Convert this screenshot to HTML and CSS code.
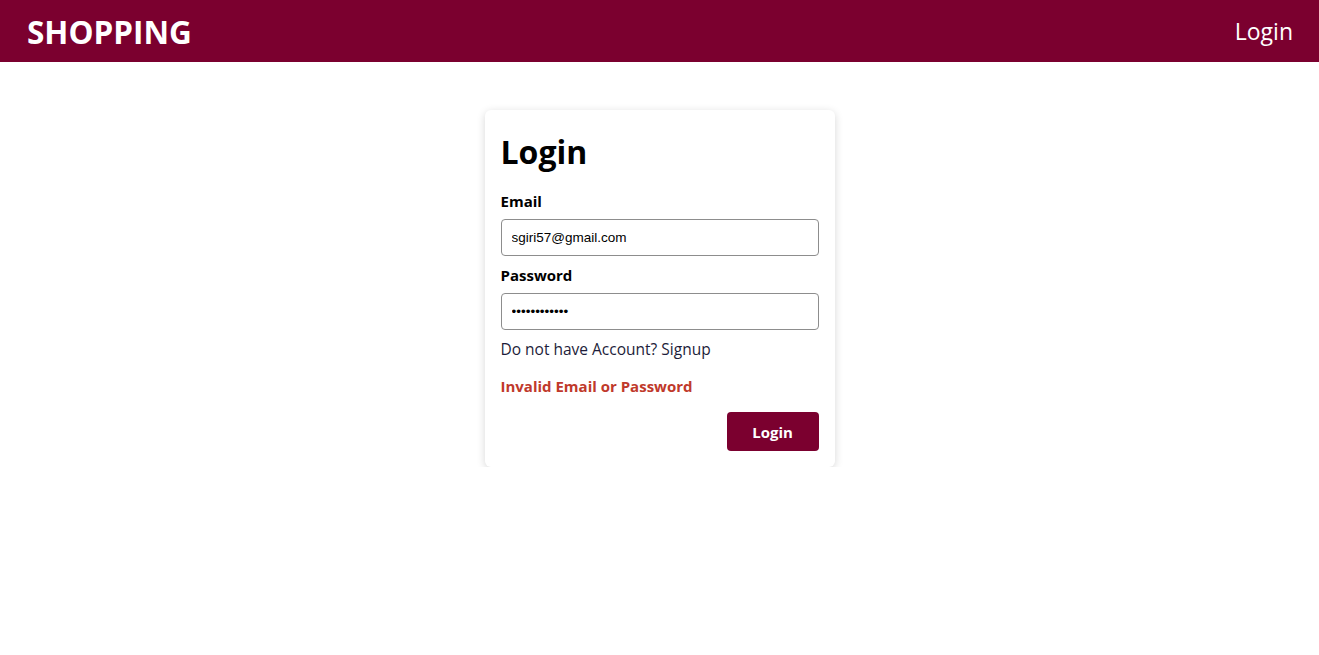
FILE: index.html
```html
<!DOCTYPE html>
<html>
<head>
<meta charset="utf-8">
<link rel="stylesheet" href="styles.css">
</head>
<body>
<header class="nav">
  <div class="brand">SHOPPING</div>
  <a class="nav-link" href="#">Login</a>
</header>
<main class="main">
  <form class="card">
    <h1 class="title">Login</h1>
    <label class="label">Email</label>
    <input class="input" type="text" value="sgiri57@gmail.com">
    <label class="label">Password</label>
    <input class="input" type="password" value="password1234">
    <a class="signup" href="#">Do not have Account? Signup</a>
    <div class="error">Invalid Email or Password</div>
    <div class="actions"><button class="btn" type="button">Login</button></div>
  </form>
</main>
</body>
</html>
```
FILE: styles.css
```css
* { box-sizing: border-box; }
body {
  margin: 0;
  font-family: "Open Sans", "Noto Sans", sans-serif;
  background: #fff;
  color: #000;
}
.nav {
  height: 62px;
  background: #7b002f;
  display: flex;
  align-items: center;
  justify-content: space-between;
  padding: 0 26px 0 27px;
}
.brand {
  color: #fff;
  font-weight: 700;
  font-size: 31.5px;
}
.nav-link {
  color: #fff;
  text-decoration: none;
  font-size: 23px;
}
.main {
  display: flex;
  justify-content: center;
  padding-top: 48px;
}
.card {
  width: 350px;
  background: #fff;
  border-radius: 6px;
  box-shadow: 0 2px 8px rgba(0,0,0,0.16);
  padding: 16px 16px 16px;
  display: flex;
  flex-direction: column;
}
.title {
  margin: 4px 0 16px;
  font-size: 32px;
  font-weight: 700;
  line-height: 44px;
}
.label {
  font-weight: 700;
  font-size: 15px;
  line-height: 22px;
  margin-bottom: 7px;
}
.input {
  width: 100%;
  height: 37px;
  border: 1px solid #8d8d8d;
  border-radius: 4px;
  padding: 0 10px;
  font-family: "Liberation Sans", Arial, sans-serif;
  font-size: 13.5px;
  color: #000;
  margin-bottom: 8px;
}
.signup {
  color: #1d1d3a;
  text-decoration: none;
  font-size: 15.5px;
  line-height: 22px;
}
.error {
  color: #c0392b;
  font-weight: 700;
  font-size: 15px;
  line-height: 22px;
  margin-top: 15px;
}
.actions {
  display: flex;
  justify-content: flex-end;
  margin-top: 15px;
}
.btn {
  width: 92px;
  height: 39px;
  background: #7b002f;
  color: #fff;
  border: none;
  border-radius: 4px;
  font-family: inherit;
  font-weight: 700;
  font-size: 15px;
}
```
